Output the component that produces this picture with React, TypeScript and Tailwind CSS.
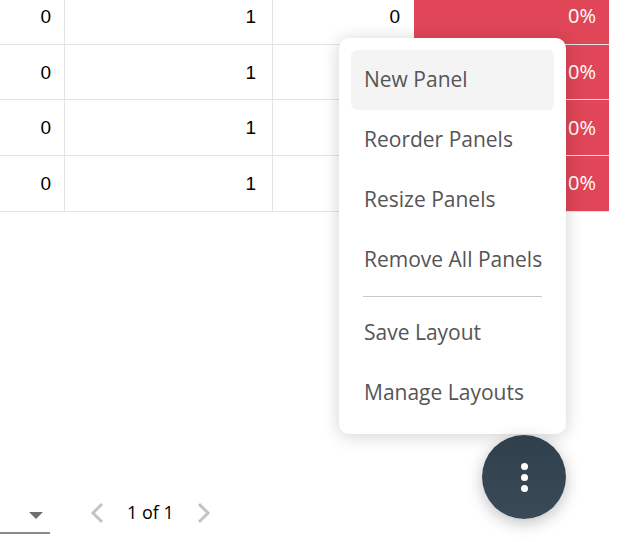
const rows = [
  { a: "0", b: "1", c: "0", pct: "0%" },
  { a: "0", b: "1", c: "0", pct: "0%" },
  { a: "0", b: "1", c: "0", pct: "0%" },
  { a: "0", b: "1", c: "0", pct: "0%" },
];

const menuTop = ["New Panel", "Reorder Panels", "Resize Panels", "Remove All Panels"];
const menuBottom = ["Save Layout", "Manage Layouts"];

const MenuItem = ({ label, active }: { label: string; active?: boolean }) => (
  <div
    className={`h-[60px] flex items-center px-[13px] rounded-md whitespace-nowrap text-[21px] text-[#555555] ${
      active ? "bg-[#f4f4f4]" : ""
    }`}
  >
    {label}
  </div>
);

const App = () => {
  return (
    <div className="relative w-[632px] h-[542px] overflow-hidden bg-white flex flex-col font-['Open_Sans',sans-serif]">
      {/* table */}
      <div className="-mt-[11px] w-[609px]">
        {rows.map((r, i) => (
          <div
            key={i}
            className="grid grid-cols-[65px_208px_141px_195px] h-[55.67px] border-b border-[#e4e4e4]"
          >
            <div className="flex items-center justify-end pr-[13px] pt-[2px] border-r border-[#e4e4e4] text-[19px] text-black font-['Liberation_Sans',sans-serif]">
              {r.a}
            </div>
            <div className="flex items-center justify-end pr-[16px] pt-[2px] border-r border-[#e4e4e4] text-[19px] text-black font-['Liberation_Sans',sans-serif]">
              {r.b}
            </div>
            <div className="flex items-center justify-end pr-[14px] pt-[2px] text-[19px] text-black font-['Liberation_Sans',sans-serif]">
              {r.c}
            </div>
            <div className="flex items-center justify-end pr-[13px] bg-[#e04657] text-white text-[20px]">
              {r.pct}
            </div>
          </div>
        ))}
      </div>

      {/* footer / pagination */}
      <div className="mt-auto mb-[8px] flex items-center h-[34px]">
        <div className="w-[50px] h-full flex items-center justify-end pr-[7px] border-b-2 border-[#8a8a8a]">
          <svg width="14" height="8" viewBox="0 0 14 8">
            <path d="M0 0 L14 0 L7 7 Z" fill="#707070" />
          </svg>
        </div>
        <div className="flex items-center ml-[40px] gap-[23px] -mt-[9px]">
          <svg width="14" height="22" viewBox="0 0 14 22">
            <path d="M12 2 L3 11 L12 20" stroke="#c4c4c4" strokeWidth="3" fill="none" />
          </svg>
          <span className="text-[18px] text-black">1 of 1</span>
          <svg width="14" height="22" viewBox="0 0 14 22">
            <path d="M2 2 L11 11 L2 20" stroke="#c4c4c4" strokeWidth="3" fill="none" />
          </svg>
        </div>
      </div>

      {/* panel menu */}
      <div className="absolute left-[339px] top-[38px] w-[227px] p-[12px] pb-[11px] bg-white rounded-[10px] shadow-[0_2px_18px_rgba(0,0,0,0.18)]">
        {menuTop.map((m, i) => (
          <MenuItem key={m} label={m} active={i === 0} />
        ))}
        <div className="mx-[12px] my-[6px] h-px bg-[#c8c8c8]" />
        {menuBottom.map((m) => (
          <MenuItem key={m} label={m} />
        ))}
      </div>

      {/* fab */}
      <button className="absolute left-[482px] top-[435px] w-[84px] h-[84px] rounded-full bg-gradient-to-b from-[#2f3f4b] to-[#3a4a58] shadow-[0_4px_16px_rgba(0,0,0,0.25)] flex flex-col items-center justify-center gap-[4px]">
        <span className="w-[7px] h-[7px] rounded-full bg-white" />
        <span className="w-[7px] h-[7px] rounded-full bg-white" />
        <span className="w-[7px] h-[7px] rounded-full bg-white" />
      </button>
    </div>
  );
};

export default App;
